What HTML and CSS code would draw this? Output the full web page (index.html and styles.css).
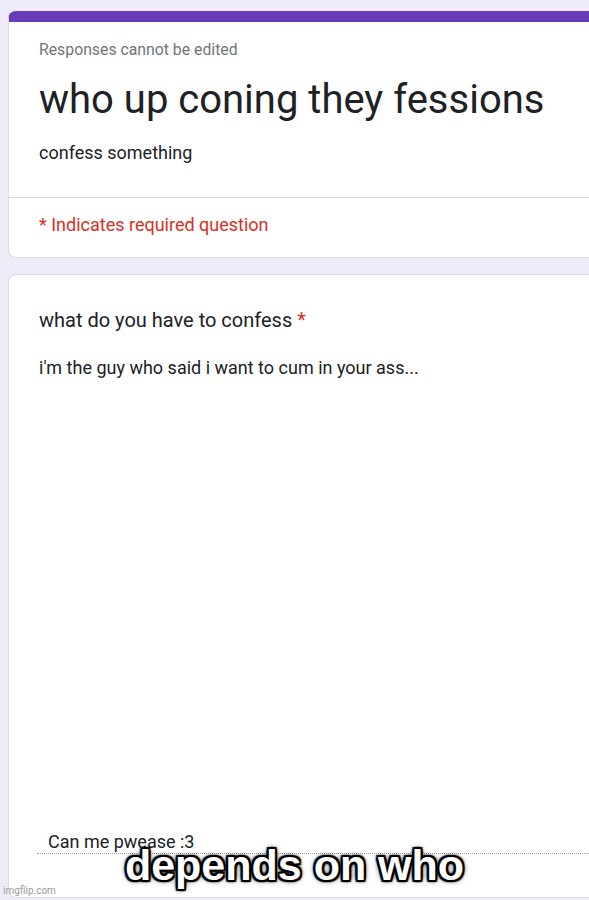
FILE: index.html
```html
<!DOCTYPE html>
<html lang="en">
<head>
    <meta charset="UTF-8">
    <title>who up coning they fessions</title>
    <link rel="stylesheet" href="styles.css">
</head>
<body>
    <div class="page">
        <!-- Header card -->
        <div class="card header-card">
            <div class="card-top">
                <p class="note">Responses cannot be edited</p>
                <h1 class="form-title">who up coning they fessions</h1>
                <p class="form-desc">confess something</p>
            </div>
            <div class="card-bottom">
                <p class="required-note">* Indicates required question</p>
            </div>
        </div>
        <!-- Question card -->
        <div class="card question-card">
            <p class="question">what do you have to confess <span class="star">*</span></p>
            <p class="answer">i'm the guy who said i want to cum in your ass...</p>
            <div class="reply">Can me pwease :3</div>
        </div>
    </div>

    <div class="caption">depends on who</div>
    <div class="watermark">imgflip.com</div>
</body>
</html>
```
FILE: styles.css
```css
body {
    margin: 0;
    background-color: #f0ebf8;
    font-family: Roboto, Arial, sans-serif;
    color: #202124;
    overflow: hidden;
    height: 900px;
    position: relative;
}
.page {
    padding: 11px 0 0 8px;
    display: flex;
    flex-direction: column;
    gap: 16px;
}
.card {
    background-color: #fff;
    border: 1px solid #dadce0;
    border-right: none;
    border-radius: 8px 0 0 8px;
}
.header-card {
    border-top: 11px solid #673ab7;
}
.card-top {
    padding: 18px 0 32px 30px;
    border-bottom: 1px solid #dadce0;
}
.note {
    margin: 0;
    font-size: 15.8px;
    line-height: 20px;
    color: #70757a;
}
.form-title {
    margin: 16px 0 0;
    font-size: 40px;
    font-weight: 400;
    line-height: 48px;
}
.form-desc {
    margin: 17px 0 0;
    font-size: 18px;
    line-height: 24px;
}
.card-bottom {
    padding: 15px 0 20px 30px;
}
.required-note {
    margin: 0;
    font-size: 18px;
    line-height: 24px;
    color: #d93025;
}
.question-card {
    box-sizing: border-box;
    height: 624px;
    padding: 33px 0 43px 30px;
    display: flex;
    flex-direction: column;
}
.question {
    margin: 0;
    font-size: 20px;
    line-height: 24px;
}
.star {
    color: #d93025;
}
.answer {
    margin: 24px 0 0;
    font-size: 18px;
    line-height: 24px;
}
.reply {
    margin: auto 0 0 -2px;
    padding: 0 0 0 11px;
    font-size: 18px;
    line-height: 22px;
    border-bottom: 1px dotted #9aa0a6;
}
.caption {
    position: absolute;
    left: 0;
    right: 0;
    top: 841px;
    text-align: center;
    font-family: "Liberation Sans", Arial, sans-serif;
    font-weight: 700;
    font-size: 43px;
    color: #fff;
    text-shadow: 2px 2px 1px #000, -2px -2px 1px #000, 2px -2px 1px #000, -2px 2px 1px #000,
        0 2px 1px #000, 0 -2px 1px #000, 2px 0 1px #000, -2px 0 1px #000, 0 0 6px #000;
}
.watermark {
    position: absolute;
    left: 3px;
    top: 885px;
    font-size: 10px;
    color: #9b9b9b;
}
```
